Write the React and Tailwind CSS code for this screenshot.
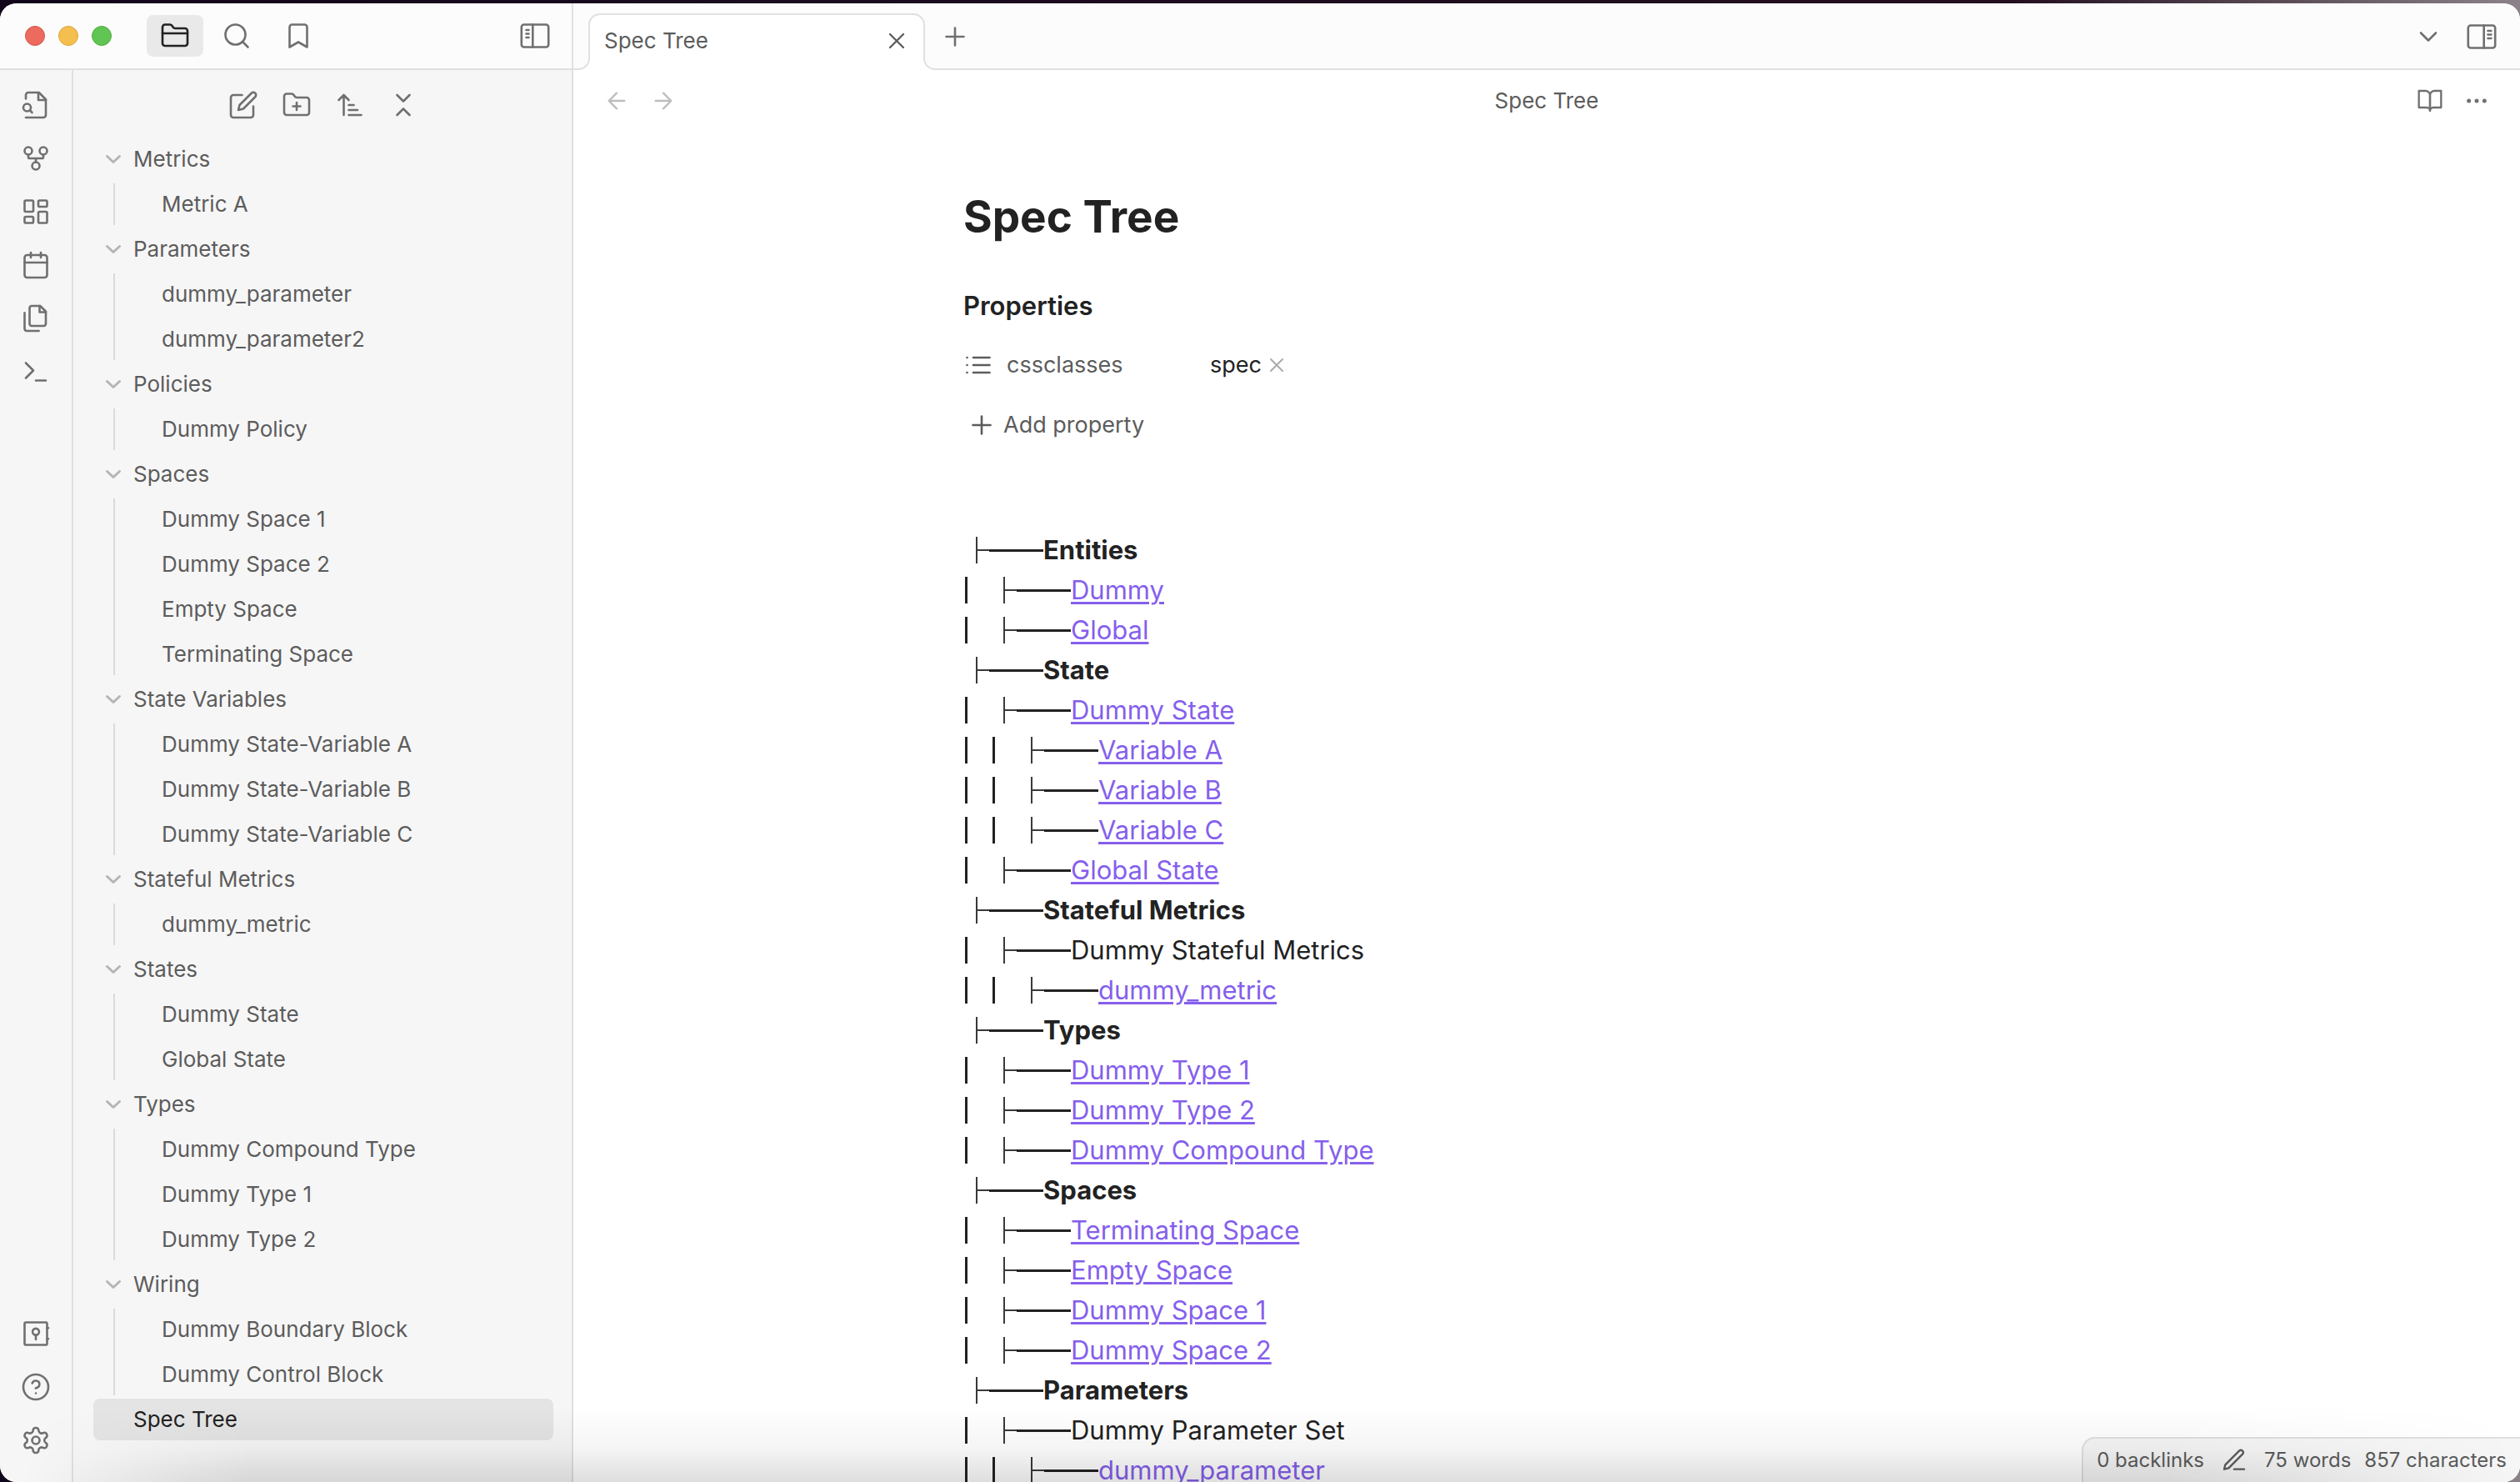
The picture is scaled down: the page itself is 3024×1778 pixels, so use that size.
import React from 'react';

function Icon({ size = 'size-9', className = '', children }) {
  return (
    <svg
      viewBox="0 0 24 24"
      className={`${size} shrink-0 fill-none stroke-current ${className}`}
      strokeWidth="1.75"
      strokeLinecap="round"
      strokeLinejoin="round"
      aria-hidden="true"
    >
      {children}
    </svg>
  );
}

function IconButton({ label, className = '', children }) {
  return (
    <button type="button" aria-label={label} className={`flex shrink-0 items-center justify-center ${className}`}>
      {children}
    </button>
  );
}

const glyphs = {
  folder: (
    <>
      <path d="M4 20h16a2 2 0 0 0 2-2V8a2 2 0 0 0-2-2h-7.93a2 2 0 0 1-1.66-.9l-.82-1.2A2 2 0 0 0 7.93 3H4a2 2 0 0 0-2 2v13c0 1.1.9 2 2 2Z" />
      <path d="M2 10h20" />
    </>
  ),
  search: (
    <>
      <circle cx="11" cy="11" r="8" />
      <path d="m21 21-4.3-4.3" />
    </>
  ),
  bookmark: <path d="m19 21-7-4-7 4V5a2 2 0 0 1 2-2h10a2 2 0 0 1 2 2v16z" />,
  panelLeft: (
    <>
      <rect x="1.2" y="3" width="21.6" height="18" rx="2" />
      <path d="M10.2 3v18M5 7.3h2M5 10.3h2M5 13.3h2" />
    </>
  ),
  panelRight: (
    <>
      <rect x="1.2" y="3" width="21.6" height="18" rx="2" />
      <path d="M13.8 3v18M17 7.3h2.6M17 10.3h2.6M17 13.3h2.6" />
    </>
  ),
  chevronDown: <path d="m6 9 6 6 6-6" />,
  plus: <path d="M5 12h14M12 5v14" />,
  close: <path d="M18 6 6 18M6 6l12 12" />,
  arrowLeft: <path d="m12 19-7-7 7-7M19 12H5" />,
  arrowRight: <path d="M5 12h14M12 5l7 7-7 7" />,
  book: (
    <>
      <path d="M2 3h6a4 4 0 0 1 4 4v14a3 3 0 0 0-3-3H2z" />
      <path d="M22 3h-6a4 4 0 0 0-4 4v14a3 3 0 0 1 3-3h7z" />
    </>
  ),
  more: (
    <g className="fill-current">
      <circle cx="12" cy="12" r="1" />
      <circle cx="19" cy="12" r="1" />
      <circle cx="5" cy="12" r="1" />
    </g>
  ),
  fileSearch: (
    <>
      <path d="M4 22h14a2 2 0 0 0 2-2V7.5L14.5 2H6a2 2 0 0 0-2 2v3" />
      <path d="M14 2v6h6" />
      <circle cx="5" cy="14" r="3" />
      <path d="m9 18-1.5-1.5" />
    </>
  ),
  fork: (
    <>
      <circle cx="12" cy="18" r="3" />
      <circle cx="6" cy="6" r="3" />
      <circle cx="18" cy="6" r="3" />
      <path d="M18 9v2c0 .6-.4 1-1 1H7c-.6 0-1-.4-1-1V9M12 12v3" />
    </>
  ),
  dashboard: (
    <>
      <rect x="3" y="3" width="7" height="9" rx="1" />
      <rect x="14" y="3" width="7" height="5" rx="1" />
      <rect x="14" y="12" width="7" height="9" rx="1" />
      <rect x="3" y="16" width="7" height="5" rx="1" />
    </>
  ),
  calendar: (
    <>
      <rect x="3" y="4" width="18" height="18" rx="2" />
      <path d="M16 2v4M8 2v4M3 10h18" />
    </>
  ),
  files: (
    <>
      <path d="M15.5 2H8.6c-.4 0-.8.2-1.1.5-.3.3-.5.7-.5 1.1v12.8c0 .4.2.8.5 1.1.3.3.7.5 1.1.5h9.8c.4 0 .8-.2 1.1-.5.3-.3.5-.7.5-1.1V6.5L15.5 2z" />
      <path d="M3 7.6v12.8c0 .4.2.8.5 1.1.3.3.7.5 1.1.5h9.8" />
      <path d="M15 2v5h5" />
    </>
  ),
  terminal: <path d="m4 17 6-6-6-6M12 19h8" />,
  vault: (
    <>
      <rect x="3" y="3" width="18" height="18" rx="1" />
      <circle cx="12" cy="10.5" r="2.6" />
      <path d="M12 13.1v3.6M21 7.5h1M21 16.2h1" />
    </>
  ),
  help: (
    <>
      <circle cx="12" cy="12" r="10" />
      <path d="M9.09 9a3 3 0 0 1 5.83 1c0 2-3 3-3 3M12 17h.01" />
    </>
  ),
  settings: (
    <>
      <path d="M12.22 2h-.44a2 2 0 0 0-2 2v.18a2 2 0 0 1-1 1.73l-.43.25a2 2 0 0 1-2 0l-.15-.08a2 2 0 0 0-2.73.73l-.22.38a2 2 0 0 0 .73 2.73l.15.1a2 2 0 0 1 1 1.72v.51a2 2 0 0 1-1 1.74l-.15.09a2 2 0 0 0-.73 2.73l.22.38a2 2 0 0 0 2.73.73l.15-.08a2 2 0 0 1 2 0l.43.25a2 2 0 0 1 1 1.73V20a2 2 0 0 0 2 2h.44a2 2 0 0 0 2-2v-.18a2 2 0 0 1 1-1.73l.43-.25a2 2 0 0 1 2 0l.15.08a2 2 0 0 0 2.73-.73l.22-.39a2 2 0 0 0-.73-2.73l-.15-.08a2 2 0 0 1-1-1.74v-.5a2 2 0 0 1 1-1.74l.15-.09a2 2 0 0 0 .73-2.73l-.22-.38a2 2 0 0 0-2.73-.73l-.15.08a2 2 0 0 1-2 0l-.43-.25a2 2 0 0 1-1-1.73V4a2 2 0 0 0-2-2z" />
      <circle cx="12" cy="12" r="3" />
    </>
  ),
  edit: (
    <>
      <path d="M11 4H4a2 2 0 0 0-2 2v14a2 2 0 0 0 2 2h14a2 2 0 0 0 2-2v-7" />
      <path d="M18.5 2.5a2.12 2.12 0 0 1 3 3L12 15l-4 1 1-4Z" />
    </>
  ),
  folderPlus: (
    <>
      <path d="M4 20h16a2 2 0 0 0 2-2V8a2 2 0 0 0-2-2h-7.93a2 2 0 0 1-1.66-.9l-.82-1.2A2 2 0 0 0 7.93 3H4a2 2 0 0 0-2 2v13c0 1.1.9 2 2 2Z" />
      <path d="M12 10v6M9 13h6" />
    </>
  ),
  sort: <path d="m3 8 4-4 4 4M7 4v16M11 12h4M11 16h7M11 20h10" />,
  collapse: <path d="m7 20 5-5 5 5M7 4l5 5 5-5" />,
  list: <path d="M8 6h13M8 12h13M8 18h13M3 6h.01M3 12h.01M3 18h.01" />,
  pencil: (
    <>
      <path d="M12 20h9" />
      <path d="M16.5 3.5a2.12 2.12 0 0 1 3 3L7 19l-4 1 1-4Z" />
    </>
  ),
};

const folders = [
  ['Metrics', ['Metric A']],
  ['Parameters', ['dummy_parameter', 'dummy_parameter2']],
  ['Policies', ['Dummy Policy']],
  ['Spaces', ['Dummy Space 1', 'Dummy Space 2', 'Empty Space', 'Terminating Space']],
  ['State Variables', ['Dummy State-Variable A', 'Dummy State-Variable B', 'Dummy State-Variable C']],
  ['Stateful Metrics', ['dummy_metric']],
  ['States', ['Dummy State', 'Global State']],
  ['Types', ['Dummy Compound Type', 'Dummy Type 1', 'Dummy Type 2']],
  ['Wiring', ['Dummy Boundary Block', 'Dummy Control Block']],
];

// [depth, label, kind]
const specTree = [
  [0, 'Entities', 'heading'],
  [1, 'Dummy', 'link'],
  [1, 'Global', 'link'],
  [0, 'State', 'heading'],
  [1, 'Dummy State', 'link'],
  [2, 'Variable A', 'link'],
  [2, 'Variable B', 'link'],
  [2, 'Variable C', 'link'],
  [1, 'Global State', 'link'],
  [0, 'Stateful Metrics', 'heading'],
  [1, 'Dummy Stateful Metrics', 'text'],
  [2, 'dummy_metric', 'link'],
  [0, 'Types', 'heading'],
  [1, 'Dummy Type 1', 'link'],
  [1, 'Dummy Type 2', 'link'],
  [1, 'Dummy Compound Type', 'link'],
  [0, 'Spaces', 'heading'],
  [1, 'Terminating Space', 'link'],
  [1, 'Empty Space', 'link'],
  [1, 'Dummy Space 1', 'link'],
  [1, 'Dummy Space 2', 'link'],
  [0, 'Parameters', 'heading'],
  [1, 'Dummy Parameter Set', 'text'],
  [2, 'dummy_parameter', 'link'],
];

const ribbonTop = [
  ['Open quick switcher', 'fileSearch'],
  ['Open graph view', 'fork'],
  ['Create new canvas', 'dashboard'],
  ["Open today's daily note", 'calendar'],
  ['Insert template', 'files'],
  ['Open command palette', 'terminal'],
];
const ribbonBottom = [
  ['Open another vault', 'vault'],
  ['Help', 'help'],
  ['Settings', 'settings'],
];
const explorerTools = [
  ['New note', 'edit'],
  ['New folder', 'folderPlus'],
  ['Change sort order', 'sort'],
  ['Collapse all', 'collapse'],
];

function RibbonGroup({ items }) {
  return (
    <div className="flex flex-col items-center gap-7">
      {items.map(([label, name]) => (
        <IconButton key={name} label={label}>
          <Icon>{glyphs[name]}</Icon>
        </IconButton>
      ))}
    </div>
  );
}

function SidebarHeader() {
  return (
    <div className="flex w-[688px] shrink-0 items-center border-r-2 border-b-2 border-[#e0e0e0] pr-[26px] pl-[30px] text-[#707070]">
      <div className="flex gap-4">
        <span className="size-6 rounded-full border border-[#d5564b] bg-[#ec6a5e]" />
        <span className="size-6 rounded-full border border-[#dba73c] bg-[#f4bf4f]" />
        <span className="size-6 rounded-full border border-[#4fae42] bg-[#61c554]" />
      </div>
      <div className="ml-[42px] flex gap-1.5">
        <IconButton label="Files" className="h-[50px] w-[68px] rounded-lg bg-[#e9e9e9] text-[#222222]">
          <Icon>{glyphs.folder}</Icon>
        </IconButton>
        <IconButton label="Search" className="h-[50px] w-[68px]">
          <Icon>{glyphs.search}</Icon>
        </IconButton>
        <IconButton label="Bookmarks" className="h-[50px] w-[68px]">
          <Icon>{glyphs.bookmark}</Icon>
        </IconButton>
      </div>
      <IconButton label="Collapse left sidebar" className="ml-auto">
        <Icon>{glyphs.panelLeft}</Icon>
      </IconButton>
    </div>
  );
}

function TabBar() {
  return (
    <div className="flex min-w-0 flex-1 items-end text-[#707070] shadow-[inset_0_-2px_0_#e0e0e0]">
      <div className="relative ml-[18px] flex h-[68px] w-[404px] items-center justify-between rounded-t-[14px] border-2 border-b-0 border-[#e0e0e0] bg-white pr-4 pb-1 pl-[17px] text-[#5c5c5c]">
        <span className="absolute right-full bottom-0 size-4 bg-white">
          <span className="block size-4 rounded-br-[14px] border-r-2 border-b-2 border-[#e0e0e0] bg-[#fcfcfc]" />
        </span>
        <span className="absolute bottom-0 left-full size-4 bg-white">
          <span className="block size-4 rounded-bl-[14px] border-b-2 border-l-2 border-[#e0e0e0] bg-[#fcfcfc]" />
        </span>
        <span className="text-[26px] leading-8">Spec Tree</span>
        <IconButton label="Close tab">
          <Icon size="size-8">{glyphs.close}</Icon>
        </IconButton>
      </div>
      <div className="flex flex-1 items-center justify-between self-stretch pr-7 pl-[18px]">
        <IconButton label="New tab">
          <Icon>{glyphs.plus}</Icon>
        </IconButton>
        <div className="flex gap-7">
          <IconButton label="Tab list">
            <Icon>{glyphs.chevronDown}</Icon>
          </IconButton>
          <IconButton label="Expand right sidebar">
            <Icon>{glyphs.panelRight}</Icon>
          </IconButton>
        </div>
      </div>
    </div>
  );
}

function Explorer() {
  return (
    <aside className="flex w-[600px] shrink-0 flex-col border-r-2 border-[#e0e0e0] bg-[#f6f6f6] pt-6 pl-0.5">
      <div className="flex justify-center gap-7 text-[#707070]">
        {explorerTools.map(([label, name]) => (
          <IconButton key={name} label={label}>
            <Icon>{glyphs[name]}</Icon>
          </IconButton>
        ))}
      </div>
      <nav aria-label="Files" className="mt-[22px] flex flex-col gap-1 px-[22px] text-[26px] leading-[34px] text-[#5c5c5c]">
        {folders.map(([name, files]) => (
          <div key={name} className="flex flex-col gap-1">
            <button type="button" aria-expanded="true" className="flex h-[50px] items-center gap-3.5 rounded-lg pl-3.5 text-left">
              <svg viewBox="0 0 20 20" className="size-5 shrink-0 fill-none stroke-[#b5b5b5]" strokeWidth="3" strokeLinecap="round" strokeLinejoin="round" aria-hidden="true">
                <path d="M2.5 6.5 10 13.5l7.5-7" />
              </svg>
              {name}
            </button>
            <div className="ml-6 flex flex-col gap-1 border-l-2 border-[#dadada]">
              {files.map((file) => (
                <a key={file} href="#" className="flex h-[50px] items-center pl-14">
                  {file}
                </a>
              ))}
            </div>
          </div>
        ))}
        <a href="#" aria-current="page" className="flex h-[50px] items-center rounded-lg bg-[#e4e4e4] pl-12 text-[#222222]">
          Spec Tree
        </a>
      </nav>
    </aside>
  );
}

function TreeRow({ depth, label, kind }) {
  return (
    <li className="flex h-12 items-center">
      {Array.from({ length: depth }, (_, i) => (
        <span key={i} className="w-[33px] pl-0.5" aria-hidden="true">
          <span className="block h-8 w-[3px] bg-[#222222]" />
        </span>
      ))}
      <span className="ml-[15px] flex h-8 w-[81px] items-center border-l-2 border-[#3a3a3a]" aria-hidden="true">
        <span className="h-0.5 w-3.5 bg-[#3a3a3a]" />
        <span className="h-[3px] flex-1 bg-[#222222]" />
      </span>
      {kind === 'link' && (
        <a href="#" className="text-[#855fec] underline decoration-[3px] underline-offset-3">
          {label}
        </a>
      )}
      {kind === 'heading' && <strong className="font-bold">{label}</strong>}
      {kind === 'text' && <span>{label}</span>}
    </li>
  );
}

function Note() {
  return (
    <article className="mx-auto w-full max-w-[1400px] pt-[70px] text-[#222222]">
      <h1 className="text-[53px] leading-16 font-bold">Spec Tree</h1>
      <section className="mt-[53px]">
        <h2 className="text-[31px] leading-11 font-semibold">Properties</h2>
        <div className="mt-[21px] flex h-14 items-center text-[27px] leading-9">
          <div className="flex w-[296px] items-center gap-4 text-[#5c5c5c]">
            <Icon>{glyphs.list}</Icon>
            <span>cssclasses</span>
          </div>
          <span>spec</span>
          <IconButton label="Remove spec" className="ml-1 text-[#ababab]">
            <Icon size="size-7">{glyphs.close}</Icon>
          </IconButton>
        </div>
        <button type="button" className="mt-4 flex h-14 items-center gap-2 pl-1 text-[27px] leading-9 text-[#5c5c5c]">
          <Icon>{glyphs.plus}</Icon>
          Add property
        </button>
      </section>
      <ul className="mt-[98px] text-[31px] leading-12">
        {specTree.map(([depth, label, kind], i) => (
          <TreeRow key={i} depth={depth} label={label} kind={kind} />
        ))}
      </ul>
    </article>
  );
}

export default function App() {
  return (
    <div className="h-screen overflow-hidden bg-[linear-gradient(to_right,#12061c,#241020_80%,#8b8389)] pt-1 font-['Inter',sans-serif]">
      <div className="relative flex h-full flex-col overflow-hidden rounded-[20px] bg-white">
        <header className="flex h-20 shrink-0 bg-[#fcfcfc]">
          <SidebarHeader />
          <TabBar />
        </header>
        <div className="flex min-h-0 flex-1">
          <nav aria-label="Ribbon" className="flex w-[88px] shrink-0 flex-col justify-between border-r-2 border-[#e0e0e0] bg-[#f6f6f6] pt-6 pb-8 text-[#707070]">
            <RibbonGroup items={ribbonTop} />
            <RibbonGroup items={ribbonBottom} />
          </nav>
          <Explorer />
          <main className="flex min-w-0 flex-1 flex-col bg-white">
            <div className="grid h-[74px] shrink-0 grid-cols-[1fr_auto_1fr] items-center px-9 text-[#707070]">
              <div className="flex gap-6 text-[#bdbdbd]">
                <IconButton label="Back">
                  <Icon size="size-8">{glyphs.arrowLeft}</Icon>
                </IconButton>
                <IconButton label="Forward">
                  <Icon size="size-8">{glyphs.arrowRight}</Icon>
                </IconButton>
              </div>
              <span className="text-[26px] leading-8 text-[#5c5c5c]">Spec Tree</span>
              <div className="flex justify-end gap-6">
                <IconButton label="Reading view">
                  <Icon size="size-8">{glyphs.book}</Icon>
                </IconButton>
                <IconButton label="More options">
                  <Icon size="size-8">{glyphs.more}</Icon>
                </IconButton>
              </div>
            </div>
            <div className="min-h-0 flex-1 overflow-hidden">
              <Note />
            </div>
          </main>
        </div>
        <footer className="absolute right-0 bottom-0 flex h-[54px] items-center rounded-tl-2xl border-t-2 border-l-2 border-[#e0e0e0] bg-[#f6f6f6] pr-4 pl-4 text-2xl leading-8 text-[#5c5c5c]">
          <span>0 backlinks</span>
          <IconButton label="Editing mode" className="ml-5">
            <Icon size="size-8">{glyphs.pencil}</Icon>
          </IconButton>
          <span className="ml-5">75 words</span>
          <span className="ml-4">857 characters</span>
        </footer>
        <div className="pointer-events-none absolute inset-x-0 bottom-0 h-[90px] bg-linear-to-t from-black/13 via-black/4 via-45% to-transparent [mask-image:linear-gradient(to_right,transparent_1%,black_10%,black_86%,transparent)]" />
      </div>
    </div>
  );
}
